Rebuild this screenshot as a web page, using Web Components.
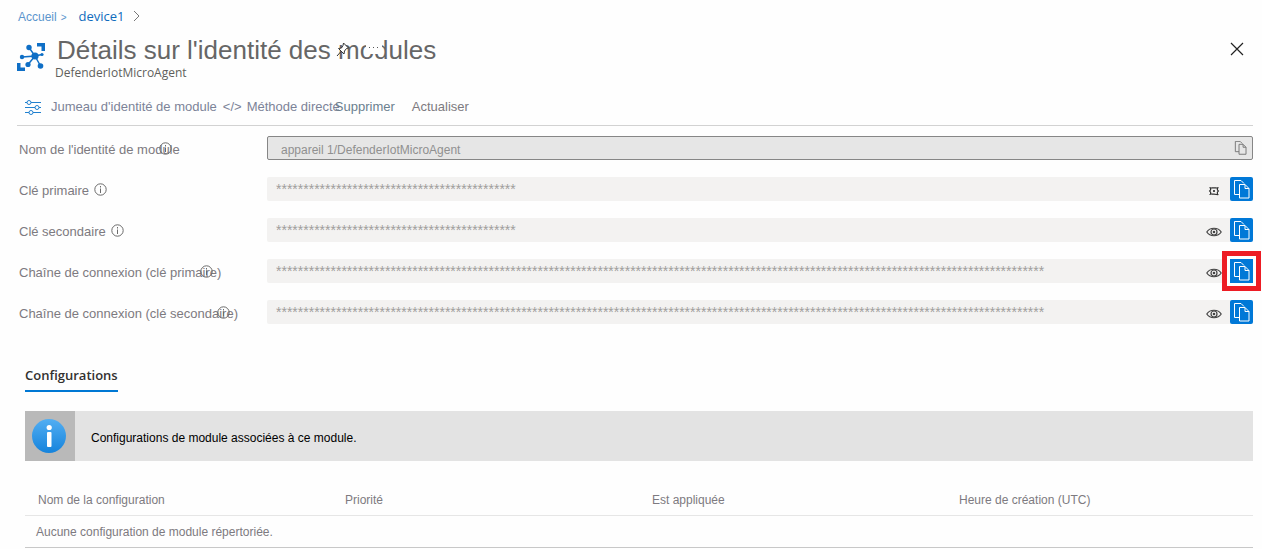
<!DOCTYPE html>
<html lang="fr">
<head>
<meta charset="utf-8">
<title>Détails sur l'identité des modules</title>
<style>
  body { margin: 0; background: #fefefe; font-family: "Liberation Sans", Arial, sans-serif; font-size: 13px; color: #7d7a80; }
</style>
</head>
<body>
<module-page></module-page>

<script>
const define = (name, html, setup) => customElements.define(name, class extends HTMLElement {
  connectedCallback() {
    if (this.shadowRoot) return;
    const root = this.attachShadow({ mode: 'open' });
    root.innerHTML = html;
    if (setup) setup(this, root);
  }
});

const copyPaths = '<path d="M6.500 14.500H1.500V.5H8l3 3"/><path d="M6.500 4.500h5.500l4 4v9.500h-9.500z"/><path d="M12 4.500v4h4"/>';

define('page-crumbs', `
<style>
  :host { display: block; }
  nav { display: flex; align-items: center; height: 32px; padding-left: 18px; }
  a { color: #5b95cd; text-decoration: none; font-size: 12px; line-height: 16px; padding-top: 2px; }
  span { font-size: 10px; color: #5b95cd; margin: 0 12px 0 4px; padding-top: 2px; }
  a.current { color: #0f6cbd; font: 13px/16px "Open Sans", sans-serif; padding-top: 0; }
  svg { margin-left: 8px; }
</style>
<nav aria-label="Fil d'Ariane">
  <a href="#">Accueil</a><span>&gt;</span><a class="current" href="#">device1</a>
  <svg width="7" height="12" viewBox="0 0 7 12" fill="none" stroke="#777"><path d="M1 1l5 5-5 5"/></svg>
</nav>`);

define('page-title', `
<style>
  :host { display: block; }
  header { display: flex; align-items: flex-start; padding: 3px 18px 0 17px; height: 52px; box-sizing: border-box; }
  .logo { margin-top: 8px; flex: none; }
  .text { margin-left: 10px; flex: 1; }
  h1 { position: relative; width: max-content; margin: 0 0 0 2px; font-size: 26px; line-height: 30px; font-weight: 400; color: #666; }
  .pin { position: absolute; left: 279px; top: 7px; }
  .more { position: absolute; left: 309px; top: 1px; width: 16px; height: 18px; padding: 0; border: 0; background: #fefefe; }
  .more svg { display: block; }
  p { margin: 0; font: 12px/16px "Open Sans", sans-serif; color: #605e5c; }
  .close { border: 0; padding: 0; background: none; width: 14px; height: 14px; margin-top: 7px; }
  .close svg { display: block; }
</style>
<header>
  <svg class="logo" width="28" height="28" viewBox="0 0 28 28">
    <g fill="#0f6fc6"><path d="M20 0h8v8h-3.500V3.500H20zM0 20h3.500v4.500H8V28H0z"/>
    <circle cx="12" cy="4.500" r="2.700"/><circle cx="18" cy="13" r="3.600"/><circle cx="5" cy="14" r="2.200"/><circle cx="11" cy="21.500" r="2.600"/><circle cx="23.500" cy="23" r="2.800"/><circle cx="25" cy="11.500" r="1.600"/></g>
    <path d="M12 4.500L18 13 5 14M11 21.500L18 13l5.500 10M18 13l7-1.500" fill="none" stroke="#0f6fc6" stroke-width="1.500"/>
  </svg>
  <div class="text">
    <h1>Détails sur l'identité des modules
      <svg class="pin" width="14" height="15" viewBox="0 0 14 15" fill="none" stroke="#333"><path fill="#fefefe" d="M7.500 1l5 5-2 .5-2 2.500-.5 3-5.500-5.500 3-.5L7 3.500z"/><path d="M5 9.500L1 14"/></svg>
      <button class="more" aria-label="Plus"><svg width="16" height="18" fill="#555"><path d="M3 11h1v1H3zM7 11h1v1H7zM11 11h1v1h-1z"/></svg></button>
    </h1>
    <p>DefenderIotMicroAgent</p>
  </div>
  <button class="close" aria-label="Fermer"><svg width="14" height="14" fill="none" stroke="#222" stroke-width="1.200"><path d="M1 1l12 12M13 1L1 13"/></svg></button>
</header>`);

define('command-bar', `
<style>
  :host { display: block; }
  div { display: flex; align-items: center; height: 42px; margin: 0 9px 0 17px; padding: 5px 0 0 8px; border-bottom: 1px solid #d2d2d2; box-sizing: border-box; }
  button { display: flex; align-items: center; border: 0; padding: 0; background: none; font: inherit; line-height: 16px; color: #7c8398; white-space: nowrap; }
  .twin svg { margin-right: 10px; }
  .method { margin-left: 6px; gap: 5px; }
  .remove { margin-left: -5px; color: #6b7f8e; }
  .refresh { margin-left: 17px; color: #7d7a80; }
</style>
<div role="toolbar">
  <button class="twin"><svg width="16" height="17" viewBox="0 0 16 17" stroke="#2080cf" fill="#fefefe"><path d="M0 3.500h16M0 8.500h16M0 13.500h16"/><circle cx="4" cy="3.500" r="2"/><circle cx="12" cy="8.500" r="2"/><circle cx="6" cy="13.500" r="2"/></svg>Jumeau d'identité de module</button>
  <button class="method"><span>&lt;/&gt;</span>Méthode directe</button>
  <button class="remove">Supprimer</button>
  <button class="refresh">Actualiser</button>
</div>`);

define('info-dot', `
<style>
  :host { display: block; width: 13px; height: 13px; flex: none; }
  svg { display: block; }
</style>
<svg width="13" height="13" fill="none" stroke="#6b6b6b"><circle cx="6.500" cy="6.500" r="5.700"/><path d="M6.500 5.500V10M6.500 3v1.500"/></svg>`);

define('copy-button', `
<style>
  :host { display: block; flex: none; }
  button { display: grid; place-items: center; width: 23px; height: 24px; border: 0; border-radius: 2px; padding: 0; background: #0078d7; }
  :host([marked]) button { position: relative; border-radius: 0; box-shadow: 0 0 0 3px #fefefe, 0 0 0 8px #ed1c24; }
</style>
<button aria-label="Copier"><svg width="17" height="19" viewBox="0 0 17 19" fill="none" stroke="#fff">${copyPaths}</svg></button>`);

define('key-field', `
<style>
  :host { display: block; }
  .row { display: grid; grid-template-columns: 248px 1fr; align-items: center; }
  .name { display: flex; align-items: center; gap: 5px; line-height: 16px; white-space: nowrap; }
  label { padding-top: 3px; }
  :host([overlap]) info-dot { margin-left: -26px; }
  .box { display: flex; align-items: center; height: 24px; box-sizing: border-box; background: #f3f2f1; border-radius: 2px; }
  input { flex: 1; min-width: 0; height: 22px; border: 0; padding: 0 0 0 9px; background: none; font: 14px/22px "Liberation Sans", sans-serif; color: #a09e9c; outline: 0; }
  .eye { border: 0; padding: 0; margin: 4px 8px 0 0; background: none; height: 12px; }
  .eye svg, .plain svg { display: block; }
  .plain { border: 0; padding: 0; margin-right: 5px; background: none; }
  :host([plain]) .box { background: #e6e6e6; border: 1px solid #868686; }
  :host([plain]) input { padding-left: 13px; font-size: 12px; color: #909090; padding-top: 3px; }
  :host([plain]) .eye, :host([plain]) copy-button, :host(:not([plain])) .plain { display: none; }
</style>
<div class="row">
  <div class="name"><label for="v"><slot></slot></label><info-dot></info-dot></div>
  <div class="box"><input id="v" type="text" readonly>
    <button class="eye" aria-label="Afficher"></button>
    <button class="plain" aria-label="Copier"><svg width="13" height="14" viewBox="0 0 17 19" fill="none" stroke="#777" stroke-width="1.300">${copyPaths}</svg></button>
    <copy-button></copy-button>
  </div>
</div>`, (el, root) => {
  const count = +el.getAttribute('stars');
  const input = root.querySelector('input');
  input.value = count ? '*'.repeat(count) : el.getAttribute('value');
  input.setAttribute('value', input.value);
  input.setAttribute('aria-label', el.textContent);
  const wide = '<svg width="16" height="12" viewBox="0 0 16 12" fill="none" stroke="#444" stroke-width="1.200"><path d="M.8 6C4 1 12 1 15.200 6 12 11 4 11 .8 6z"/><circle cx="8" cy="6" r="3"/><circle cx="8" cy="6" r=".7" fill="#222"/></svg>';
  const small = '<svg width="16" height="12" viewBox="0 0 16 12" fill="none" stroke="#333" stroke-width="1.200"><path d="M3.500 2.500c1.500 1 2 .3 4.500.3s3 .7 4.500-.3M3.500 9.500c1.500-1 2-.3 4.500-.3s3 .7 4.500.3M4.600 3.500v1.300L3.600 6l1 1.200V9M11.400 3.500v1.300l1 1.200-1 1.200V9"/><circle cx="8" cy="6" r=".5" fill="#222"/></svg>';
  root.querySelector('.eye').innerHTML = el.hasAttribute('small') ? small : wide;
  if (el.hasAttribute('marked')) root.querySelector('copy-button').setAttribute('marked', '');
});

define('tab-strip', `
<style>
  :host { display: block; }
  button { height: 26px; padding: 0; border: 0; border-bottom: 2px solid #0078d4; background: none; font: 600 13px/18px "Open Sans", sans-serif; color: #323130; display: block; padding-bottom: 6px; }
</style>
<div role="tablist"><button role="tab" aria-selected="true"><slot></slot></button></div>`);

define('info-banner', `
<style>
  :host { display: flex; align-items: center; height: 50px; background: #e3e3e3; color: #000; font-size: 12px; line-height: 16px; }
  .icon { display: grid; place-items: center; width: 50px; height: 50px; background: #b9b9b9; margin-right: 16px; }
  span { padding-top: 3px; }
</style>
<div class="icon"><svg width="36" height="36" viewBox="0 0 36 36"><defs><linearGradient id="g" x1="0" y1="0" x2="0" y2="1"><stop offset="0" stop-color="#52aef2"/><stop offset="1" stop-color="#1583dc"/></linearGradient></defs><circle cx="17" cy="18" r="17" fill="url(#g)"/><circle cx="17.200" cy="9.500" r="2.600" fill="#fff"/><rect x="15" y="14" width="4.500" height="15" rx="1" fill="#fff"/></svg></div>
<span><slot></slot></span>`);

define('config-table', `
<style>
  :host { display: block; }
  table { width: 100%; table-layout: fixed; border-collapse: separate; border-spacing: 0; font-size: 12px; line-height: 16px; }
  th { font-weight: 400; text-align: left; padding: 7px 0 7px 13px; border-bottom: 1px solid #e6e6e6; }
  td { padding: 8px 0 7px 11px; border-bottom: 1px solid #c8c8c8; }
</style>
<table>
  <thead><tr><th>Nom de la configuration</th><th>Priorité</th><th>Est appliquée</th><th>Heure de création (UTC)</th></tr></thead>
  <tbody><tr><td colspan="4">Aucune configuration de module répertoriée.</td></tr></tbody>
</table>`);

define('module-page', `
<style>
  :host { display: block; }
  .fields { display: grid; gap: 17px; padding: 10px 9px 0 19px; }
  .lower { padding: 42px 9px 0 25px; }
  tab-strip { margin-bottom: 19px; }
  config-table { margin-top: 24px; }
</style>
<page-crumbs></page-crumbs>
<page-title></page-title>
<command-bar></command-bar>
<section class="fields">
  <key-field plain overlap value="appareil 1/DefenderIotMicroAgent">Nom de l'identité de module</key-field>
  <key-field small stars="44">Clé primaire</key-field>
  <key-field stars="44">Clé secondaire</key-field>
  <key-field overlap marked stars="141">Chaîne de connexion (clé primaire)</key-field>
  <key-field overlap stars="141">Chaîne de connexion (clé secondaire)</key-field>
</section>
<section class="lower">
  <tab-strip>Configurations</tab-strip>
  <info-banner>Configurations de module associées à ce module.</info-banner>
  <config-table></config-table>
</section>`);
</script>
</body>
</html>
